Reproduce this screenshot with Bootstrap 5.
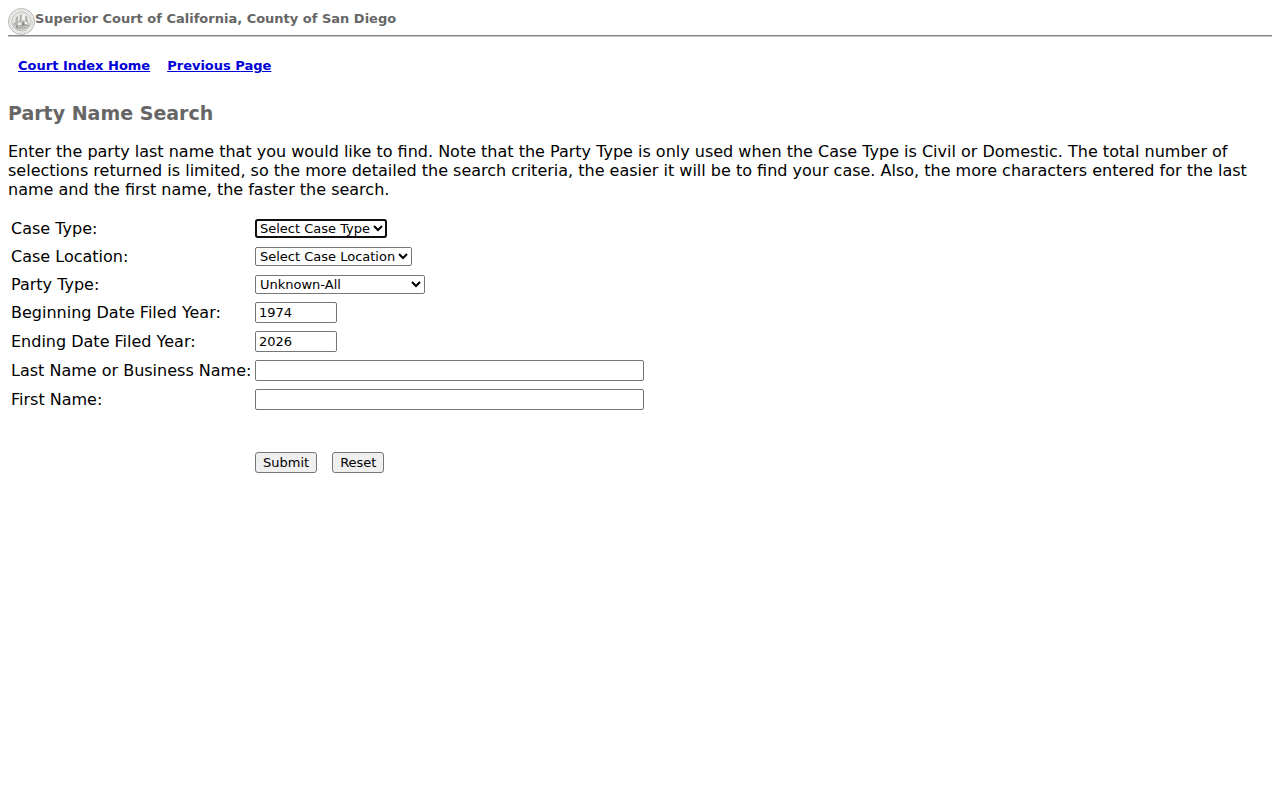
<!DOCTYPE html>
<html lang="en">
<head>
<meta charset="utf-8">
<meta name="viewport" content="width=device-width, initial-scale=1">
<title>Party Name Search</title>
<link rel="stylesheet" href="https://cdn.jsdelivr.net/npm/bootstrap@5.3.0/dist/css/bootstrap.min.css">
<style>
  body { font-family: "DejaVu Sans", sans-serif; font-size: 16px; line-height: 19px; color: #000; }
  .court-name { font-size: 13px; line-height: 21px; color: #666; }
  .court-header { height: 27px; }
  .court-rule { height: 2px; margin: 0; border-top: 1px solid #858585; border-bottom: 1px solid #c4c4c4; opacity: 1; }
  .court-links { margin: 21px 10px 0; font-size: 13px; line-height: 16px; column-gap: 17px; }
  .court-links a { color: #0000d8; }
  .page-title { font-size: 19px; line-height: 22px; color: #666; margin: 28px 0 18px; }
  .search-form { margin: 15px 3px 0; }
  .field-row { padding: 4px 0; }
  .select-row { padding-top: 5px; }
  .field-label { width: 244px; }
  .field-row select, .field-row input, .form-actions button { font-size: 13px; color: #000; border: 1px solid #767676; border-radius: 2px; }
  .field-row select { height: 19px; background: #fff; line-height: 16px; }
  .field-row input { height: 21px; padding: 1px 3px; background: #fff; line-height: 16px; }
  .field-row .case-type { width: 132px; outline: 2px solid #101010; outline-offset: -2px; border-radius: 3px; }
  .case-location { width: 157px; }
  .party-type { width: 170px; }
  .year-input { width: 82px; }
  .name-input { width: 389px; }
  .form-actions { margin-top: 38px; column-gap: 15px; }
  .form-actions button { height: 21px; line-height: 16px; padding: 1px 7px; background: #efefef; border-radius: 3px; }
  @media (min-width: 576px) { .form-actions { padding-left: 244px; } }
</style>
</head>
<body>
<div class="p-2">
  <header class="court-header d-flex align-items-start">
    <svg class="flex-shrink-0" width="27" height="27" viewBox="0 0 27 27" role="img" aria-label="Court seal">
      <circle cx="13.5" cy="13.5" r="13" fill="#f6f6f4" stroke="#aaa" stroke-width=".9"/>
      <circle cx="13.5" cy="13.5" r="11.3" fill="none" stroke="#d2d2d0" stroke-width="1.4" stroke-dasharray="1 1"/>
      <circle cx="13.5" cy="13.5" r="9.7" fill="#e6e6e3" stroke="#b4b4b2" stroke-width=".8"/>
      <path d="M8 9l2-1v5l2-1V7l2-1v6l3 1V8l2 1 1 5 2 2-2 4-4 2-5 1-5-3-2-4 3-2z" fill="#c6c6c3"/>
      <path d="M9 9v6M12.5 7v7M18 8l1 6M6 16h4l2 2 4-1 5 1M8 20h4l3-1 3 1" fill="none" stroke="#a2a2a0" stroke-width="1.1"/>
      <path d="M14.5 7h2v5h-2zM10 15h3v2h-3zM16 14h3v2h-3z" fill="#f4f4f1"/>
      <path d="M14 15l2-2 1 4-3 1zM8 17l2 1v2l-2-1z" fill="#8f8f8d"/>
    </svg>
    <strong class="court-name">Superior Court of California, County of San Diego</strong>
  </header>
  <hr class="court-rule">
  <nav class="court-links d-flex flex-wrap fw-bold" aria-label="Court index">
    <a href="#home">Court Index Home</a>
    <a href="#previous">Previous Page</a>
  </nav>
  <main>
    <h1 class="page-title fw-bold">Party Name Search</h1>
    <p class="mb-0">Enter the party last name that you would like to find. Note that the Party Type is only used when the Case Type is Civil or Domestic. The total number of selections returned is limited, so the more detailed the search criteria, the easier it will be to find your case. Also, the more characters entered for the last name and the first name, the faster the search.</p>
    <form class="search-form">
      <div class="field-row select-row d-flex flex-wrap align-items-center">
        <label class="field-label" for="caseType">Case Type:</label>
        <select id="caseType" class="case-type"><option>Select Case Type</option></select>
      </div>
      <div class="field-row select-row d-flex flex-wrap align-items-center">
        <label class="field-label" for="caseLocation">Case Location:</label>
        <select id="caseLocation" class="case-location"><option>Select Case Location</option></select>
      </div>
      <div class="field-row select-row d-flex flex-wrap align-items-center">
        <label class="field-label" for="partyType">Party Type:</label>
        <select id="partyType" class="party-type"><option>Unknown-All</option></select>
      </div>
      <div class="field-row d-flex flex-wrap align-items-center">
        <label class="field-label" for="beginYear">Beginning Date Filed Year:</label>
        <input id="beginYear" class="year-input" type="text" value="1974">
      </div>
      <div class="field-row d-flex flex-wrap align-items-center">
        <label class="field-label" for="endYear">Ending Date Filed Year:</label>
        <input id="endYear" class="year-input" type="text" value="2026">
      </div>
      <div class="field-row d-flex flex-wrap align-items-center">
        <label class="field-label" for="lastName">Last Name or Business Name:</label>
        <input id="lastName" class="name-input mw-100" type="text">
      </div>
      <div class="field-row d-flex flex-wrap align-items-center">
        <label class="field-label" for="firstName">First Name:</label>
        <input id="firstName" class="name-input mw-100" type="text">
      </div>
      <div class="form-actions d-flex">
        <button type="submit">Submit</button>
        <button type="reset">Reset</button>
      </div>
    </form>
  </main>
</div>
<script src="https://cdn.jsdelivr.net/npm/bootstrap@5.3.0/dist/js/bootstrap.bundle.min.js"></script>
</body>
</html>
